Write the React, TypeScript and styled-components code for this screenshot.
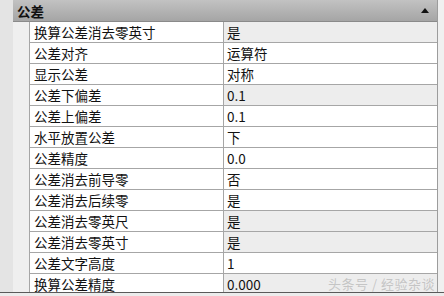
import React from 'react';
import styled, { createGlobalStyle } from 'styled-components';

const GlobalStyle = createGlobalStyle`
  * { margin: 0; padding: 0; box-sizing: border-box; }
  body { font-family: 'Noto Sans CJK SC', 'Noto Sans', sans-serif; background: #e8e8e8; }
`;

const Frame = styled.div`
  width: 444px; height: 296px; overflow: hidden; position: relative;
  display: flex; flex-direction: column; background: #e8e8e8;
`;

const Body = styled.div`
  height: 292px; overflow: hidden; display: flex;
`;

const SideStrip = styled.div<{ $w: number; $bg: string }>`
  width: ${p => p.$w}px; flex: none; background: ${p => p.$bg};
`;

const Palette = styled.div`
  width: 425px; flex: none; display: flex; flex-direction: column;
  border-right: 1px solid #9c9c9c; background: #fff;
`;

const Header = styled.div`
  height: 22px; flex: none; display: flex; align-items: center; justify-content: space-between;
  padding: 0 8px 0 4px;
  background: linear-gradient(#c2c2c2, #a5a5a5);
  border-bottom: 1px solid #8a8a8a;
  font-size: 13.5px; font-weight: bold; color: #111;
`;

const Arrow = styled.span`
  width: 0; height: 0;
  border-left: 4px solid transparent; border-right: 4px solid transparent;
  border-bottom: 5px solid #111;
`;

const Row = styled.div`
  display: grid; grid-template-columns: 16px 194px 1fr; height: 21px; flex: none;
`;

const Indent = styled.div`
  background: #efefef;
`;

const Cell = styled.div<{ $grey?: boolean; $pad: number }>`
  border-left: 1px solid #a6a6a6; border-bottom: 1px solid #a6a6a6;
  background: ${p => p.$grey ? '#ededed' : '#fff'};
  padding-left: ${p => p.$pad}px;
  font-size: 13.5px; line-height: 20px; color: #111; white-space: nowrap; overflow: hidden;
`;

const BottomBar = styled.div`
  height: 4px; flex: none; border-top: 1px solid #5a5a5a; background: #ececec;
`;

const Watermark = styled.div`
  position: absolute; right: 9px; bottom: 3px;
  font-size: 13px; color: rgba(190, 190, 190, 0.85); letter-spacing: 0.5px;
`;

const rows: { label: string; value: string; grey?: boolean }[] = [
  { label: '换算公差消去零英寸', value: '是', grey: true },
  { label: '公差对齐', value: '运算符' },
  { label: '显示公差', value: '对称' },
  { label: '公差下偏差', value: '0.1', grey: true },
  { label: '公差上偏差', value: '0.1' },
  { label: '水平放置公差', value: '下' },
  { label: '公差精度', value: '0.0' },
  { label: '公差消去前导零', value: '否' },
  { label: '公差消去后续零', value: '是' },
  { label: '公差消去零英尺', value: '是', grey: true },
  { label: '公差消去零英寸', value: '是', grey: true },
  { label: '公差文字高度', value: '1' },
  { label: '换算公差精度', value: '0.000', grey: true },
];

export default function App() {
  return (
    <>
      <GlobalStyle />
      <Frame>
        <Body>
          <SideStrip $w={13} $bg="#e4e4e4" />
          <Palette>
            <Header>
              <span>公差</span>
              <Arrow />
            </Header>
            {rows.map(r => (
              <Row key={r.label}>
                <Indent />
                <Cell $pad={4}>{r.label}</Cell>
                <Cell $pad={3} $grey={r.grey}>{r.value}</Cell>
              </Row>
            ))}
          </Palette>
          <SideStrip $w={6} $bg="#f0f0f0" />
        </Body>
        <BottomBar />
        <Watermark>头条号 / 经验杂谈</Watermark>
      </Frame>
    </>
  );
}
